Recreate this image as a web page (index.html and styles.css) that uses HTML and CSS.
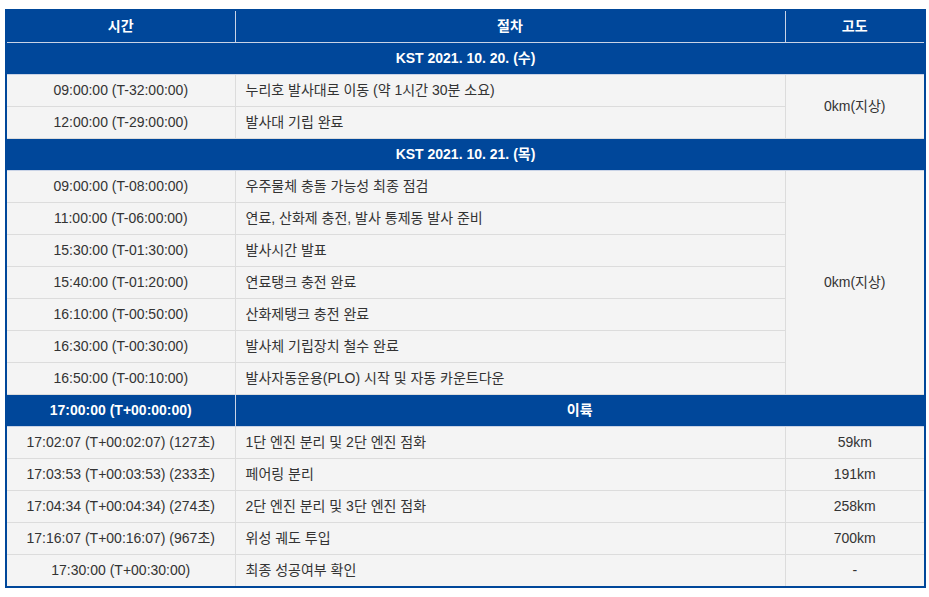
FILE: index.html
```html
<!DOCTYPE html>
<html lang="ko">
<head>
<meta charset="utf-8">
<link rel="stylesheet" href="styles.css">
</head>
<body>
<table class="sched">
  <colgroup>
    <col class="c-time">
    <col class="c-proc">
    <col class="c-alt">
  </colgroup>
  <thead>
    <tr><th>시간</th><th>절차</th><th>고도</th></tr>
  </thead>
  <tbody>
    <tr class="day"><td colspan="3">KST 2021. 10. 20. (수)</td></tr>
    <tr><td>09:00:00 (T-32:00:00)</td><td class="proc">누리호 발사대로 이동 (약 1시간 30분 소요)</td><td rowspan="2">0km(지상)</td></tr>
    <tr><td>12:00:00 (T-29:00:00)</td><td class="proc">발사대 기립 완료</td></tr>
    <tr class="day"><td colspan="3">KST 2021. 10. 21. (목)</td></tr>
    <tr><td>09:00:00 (T-08:00:00)</td><td class="proc">우주물체 충돌 가능성 최종 점검</td><td rowspan="7">0km(지상)</td></tr>
    <tr><td>11:00:00 (T-06:00:00)</td><td class="proc">연료, 산화제 충전, 발사 통제동 발사 준비</td></tr>
    <tr><td>15:30:00 (T-01:30:00)</td><td class="proc">발사시간 발표</td></tr>
    <tr><td>15:40:00 (T-01:20:00)</td><td class="proc">연료탱크 충전 완료</td></tr>
    <tr><td>16:10:00 (T-00:50:00)</td><td class="proc">산화제탱크 충전 완료</td></tr>
    <tr><td>16:30:00 (T-00:30:00)</td><td class="proc">발사체 기립장치 철수 완료</td></tr>
    <tr><td>16:50:00 (T-00:10:00)</td><td class="proc">발사자동운용(PLO) 시작 및 자동 카운트다운</td></tr>
    <tr class="day"><td>17:00:00 (T+00:00:00)</td><td colspan="2">이륙</td></tr>
    <tr><td>17:02:07 (T+00:02:07) (127초)</td><td class="proc">1단 엔진 분리 및 2단 엔진 점화</td><td>59km</td></tr>
    <tr><td>17:03:53 (T+00:03:53) (233초)</td><td class="proc">페어링 분리</td><td>191km</td></tr>
    <tr><td>17:04:34 (T+00:04:34) (274초)</td><td class="proc">2단 엔진 분리 및 3단 엔진 점화</td><td>258km</td></tr>
    <tr><td>17:16:07 (T+00:16:07) (967초)</td><td class="proc">위성 궤도 투입</td><td>700km</td></tr>
    <tr><td>17:30:00 (T+00:30:00)</td><td class="proc">최종 성공여부 확인</td><td>-</td></tr>
  </tbody>
</table>
</body>
</html>
```

FILE: styles.css
```css
html, body {
  margin: 0;
  padding: 0;
  background: #fff;
}
body {
  padding: 9px 5px 0 5px;
  font-family: "Liberation Sans", Arial, "Noto Sans CJK KR", sans-serif;
  font-size: 14px;
  color: #333;
}
.sched {
  width: 919px;
  border-collapse: collapse;
  border: 2px solid #00479a;
  table-layout: fixed;
}
.c-time { width: 229px; }
.c-proc { width: 550px; }
.c-alt { width: 140px; }
.sched th,
.sched td {
  height: 30px;
  padding: 0 10px 1px;
  border: 1px solid #dcdcdc;
  text-align: center;
  vertical-align: middle;
  background: #f4f4f4;
  line-height: 18px;
  white-space: nowrap;
}
.sched th {
  background: #00479a;
  color: #fff;
  font-weight: bold;
  border-color: #c9d3e6;
}
.sched td.proc {
  text-align: left;
}
.sched tr.day td {
  background: #00479a;
  color: #fff;
  font-weight: bold;
  border-color: #c9d3e6;
}
```
